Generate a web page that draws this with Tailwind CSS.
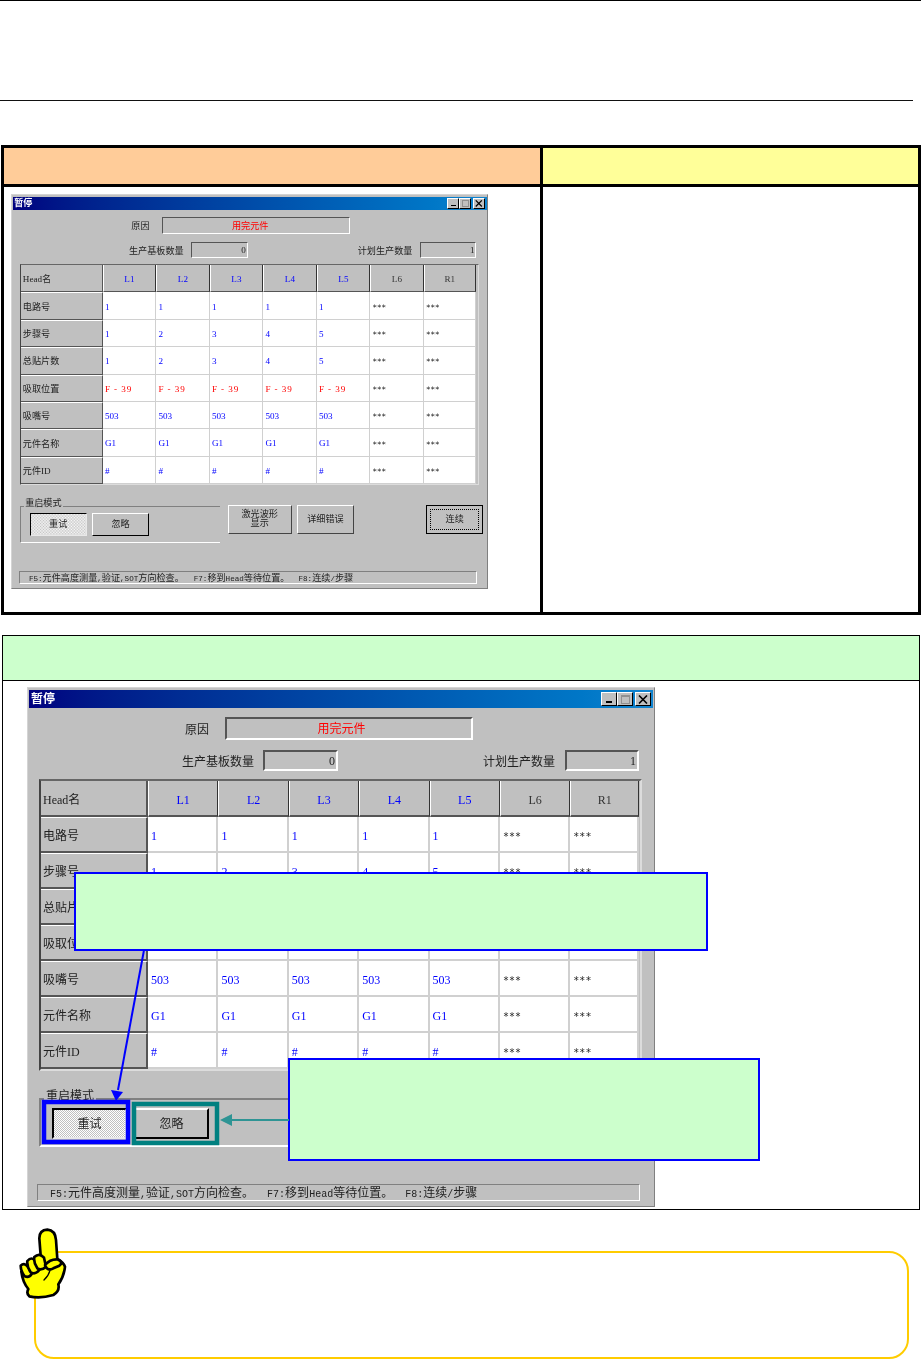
<!DOCTYPE html>
<html lang="zh">
<head>
    <meta charset="UTF-8">
    <title>暂停</title>
    <script src="https://cdn.jsdelivr.net/npm/@tailwindcss/browser@4"></script>
</head>
<body class="bg-white text-[#222] text-xs leading-none font-['Liberation_Serif','Noto_Sans_CJK_SC',serif]">

<div class="w-[921px] h-[1360px] overflow-hidden">
    <!-- Page header -->
    <div class="h-px bg-black"></div>
    <div class="h-[100px] w-[913px] border-b border-[#111]"></div>

    <!-- Upper table -->
    <div class="mt-[44px] ml-px w-[920px] h-[470px] border-[3px] border-black grid grid-cols-[536px_3px_375px] grid-rows-[36px_3px_425px] bg-black">
        <div class="bg-[#ffcc99]"></div>
        <div></div>
        <div class="bg-[#ffff99]"></div>
        <div class="col-span-3"></div>
        <div class="bg-white pl-[7px] pt-[7px]">
            <div class="[zoom:0.76] blur-[0.3px]" id="mini-slot"></div>
        </div>
        <div></div>
        <div class="bg-white"></div>
    </div>

    <!-- Lower panel -->
    <div class="relative mt-[20px] ml-[2px] w-[918px] h-[575px] border border-black">
        <div class="h-[45px] bg-[#ccffcc] border-b border-black"></div>
        <div class="pl-[24px] pt-[6px]">
            <!-- Pause dialog -->
            <div id="pause-window" class="w-[628px] h-[520px] overflow-hidden bg-[#c0c0c0] border border-[#d4d4d4] border-r-[#808080] border-b-[#808080] pt-[2px] px-px blur-[0.3px]">
                <div class="h-[18px] flex items-center justify-between pl-[2px] pr-[2px] bg-gradient-to-r from-[#000080] to-[#1084d0]">
                    <span class="text-white font-bold">暂停</span>
                    <div class="flex items-center">
                        <div class="w-[16px] h-[14px] bg-[#c0c0c0] border border-white border-r-black border-b-black relative">
                            <div class="absolute left-[4px] bottom-[2px] w-[6px] h-[2px] bg-black"></div>
                        </div>
                        <div class="w-[16px] h-[14px] bg-[#c0c0c0] border border-white border-r-black border-b-black flex items-center justify-center">
                            <div class="w-[9px] h-[9px] border border-[#909090] border-t-2"></div>
                        </div>
                        <div class="ml-[2px] w-[16px] h-[14px] bg-[#c0c0c0] border border-white border-r-black border-b-black flex items-center justify-center">
                            <svg width="10" height="9" viewBox="0 0 10 9"><path d="M1 0.5L9 8.5M9 0.5L1 8.5" stroke="#000" stroke-width="1.6" fill="none"/></svg>
                        </div>
                    </div>
                </div>

                <div class="mt-[9px] h-[23px] flex items-center">
                    <span class="ml-[156px] w-[24px] pt-[3px]">原因</span>
                    <div class="ml-[16px] w-[248px] h-[23px] flex items-center justify-center pr-[15px] pt-[1px] border-2 border-t-[#555] border-l-[#555] border-r-white border-b-white text-[#ff0000]">用完元件</div>
                </div>

                <div class="mt-[10px] h-[21px] flex items-center">
                    <span class="ml-[153px] w-[72px] pt-[3px]">生产基板数量</span>
                    <div class="ml-[9px] w-[75px] h-[21px] flex items-center justify-end pr-[1px] pt-[1px] border-2 border-t-[#555] border-l-[#555] border-r-white border-b-white">0</div>
                    <span class="ml-[145px] w-[72px] pt-[3px]">计划生产数量</span>
                    <div class="ml-[10px] w-[74px] h-[21px] flex items-center justify-end pr-[1px] pt-[1px] border-2 border-t-[#555] border-l-[#555] border-r-white border-b-white">1</div>
                </div>

                <!-- Head table, filled in by the script below -->
                <div id="head-table" class="mt-[8px] ml-[10px] w-[603px] border-2 border-t-[#666] border-l-[#444] border-r-[#dcdcdc] border-b-[#dcdcdc] grid grid-cols-[107px_repeat(6,70.4px)_68.6px] grid-rows-[36px_repeat(7,36px)]"></div>

                <div class="mt-[27px] ml-[10px] flex items-start">
                    <div class="relative w-[263px] h-[49px] border-t-2 border-b-2 border-l-2 border-t-[#808080] border-b-white border-l-[#808080] pl-[11px] pt-[8px] flex gap-[7px]">
                        <span class="absolute left-[3px] -top-[10px] px-[2px] bg-[#c0c0c0]">重启模式</span>
                        <div class="w-[75px] h-[31px] flex items-center justify-center border-2 border-t-black border-l-black border-r-[#e8e8e8] border-b-[#e8e8e8] bg-[repeating-conic-gradient(#ffffff_0_25%,#c0c0c0_0_50%)] bg-[length:2px_2px]">重试</div>
                        <div class="w-[75px] h-[31px] flex items-center justify-center border-2 border-t-white border-l-white border-r-black border-b-black">忽略</div>
                    </div>
                    <div class="-mt-px ml-[10px] w-[84px] h-[38px] flex items-center justify-center text-center border-2 border-t-white border-l-white border-r-[#444] border-b-[#444]">激光波形<br>显示</div>
                    <div class="-mt-px ml-[7px] w-[75px] h-[38px] flex items-center justify-center border-2 border-t-white border-l-white border-r-[#444] border-b-[#444]">详细错误</div>
                    <div class="-mt-px ml-[95px] w-[75px] h-[39px] p-[4px] border-2 border-black">
                        <div class="h-full flex items-center justify-center border border-dotted border-black">连续</div>
                    </div>
                </div>

                <div class="mt-[37px] ml-[8px] w-[603px] h-[17px] flex items-center pl-[12px] pt-[3px] border border-t-[#808080] border-l-[#808080] border-r-white border-b-white font-['Liberation_Mono','Noto_Sans_CJK_SC',monospace]">
                    <span><span class="text-[10px]">F5:</span>元件高度测量<span class="text-[10px]">,</span>验证<span class="text-[10px]">,SOT</span>方向检查。</span>
                    <span class="ml-[13px]"><span class="text-[10px]">F7:</span>移到<span class="text-[10px]">Head</span>等待位置。</span>
                    <span class="ml-[12px]"><span class="text-[10px]">F8:</span>连续<span class="text-[10px]">/</span>步骤</span>
                </div>
            </div>
        </div>

        <!-- Callouts over the dialog -->
        <div class="absolute left-[71px] top-[236px] w-[634px] h-[79px] bg-[#ccffcc] border-2 border-[#0000ff]"></div>
        <div class="absolute left-[285px] top-[422px] w-[472px] h-[103px] bg-[#ccffcc] border-2 border-[#0000ff]"></div>

        <!-- Highlights and arrows, viewBox is in page coordinates -->
        <svg class="absolute left-0 top-0" width="916" height="573" viewBox="3 636 916 573">
            <path d="M144 950L118 1090" stroke="#0000ff" stroke-width="2" fill="none"/>
            <path d="M116 1101L111 1090L123 1092Z" fill="#0000ff"/>
            <rect x="44" y="1102" width="84" height="40" fill="none" stroke="#0000ff" stroke-width="4.5"/>
            <rect x="134" y="1104" width="83" height="39" fill="none" stroke="#008080" stroke-width="4.5"/>
            <path d="M232 1120L289 1120" stroke="#2e9494" stroke-width="2" fill="none"/>
            <path d="M220 1120L232 1114L232 1126Z" fill="#2e9494"/>
        </svg>
    </div>

    <!-- Note box with pointing hand -->
    <div class="relative mt-[41px] ml-[34px] w-[875px] h-[108px] border-2 border-[#ffcc00] rounded-[20px]">
        <svg class="absolute -left-[21px] -top-[28px]" width="60" height="80" viewBox="45 0 180 240">
            <g fill="#ffff00" stroke="#000" stroke-width="8" stroke-linejoin="round" stroke-linecap="round">
                <path d="M122 92L118 40Q118 15 142 14Q166 16 168 45L172 102Q190 112 195 125Q192 155 175 178Q180 198 160 210Q120 222 88 214Q78 205 85 192Q68 172 64 140L122 120Z"/>
                <path d="M62 122Q72 112 82 123L96 145Q88 160 74 154Q62 138 62 122Z"/>
                <path d="M82 108Q95 93 106 108L118 135Q106 150 92 142Q80 125 82 108Z"/>
                <path d="M103 96Q118 82 132 98L138 125Q124 138 112 130Q100 112 103 96Z"/>
                <path d="M135 120Q150 102 172 103Q192 112 178 122L160 130Q142 140 135 120Z"/>
                <path d="M132 165Q146 152 150 136" fill="none" stroke-width="4"/>
            </g>
        </svg>
    </div>
</div>

<script>
    // Fill the head table
    const table = document.getElementById("head-table");
    const heads = ["L1", "L2", "L3", "L4", "L5", "L6", "R1"];
    const rows = [
        ["电路号", ["1", "1", "1", "1", "1"], "text-[#0000ff]"],
        ["步骤号", ["1", "2", "3", "4", "5"], "text-[#0000ff]"],
        ["总贴片数", ["1", "2", "3", "4", "5"], "text-[#0000ff]"],
        ["吸取位置", ["F - 39", "F - 39", "F - 39", "F - 39", "F - 39"], "text-[#ff0000] tracking-[1.2px]"],
        ["吸嘴号", ["503", "503", "503", "503", "503"], "text-[#0000ff]"],
        ["元件名称", ["G1", "G1", "G1", "G1", "G1"], "text-[#0000ff]"],
        ["元件ID", ["#", "#", "#", "#", "#"], "text-[#0000ff]"]
    ];

    let html = '<div class="flex items-center pl-[2px] pt-[4px] border-b-2 border-r-2 border-[#555]">Head名</div>';
    heads.forEach((name, i) => {
        const color = i < 5 ? "text-[#0000ff]" : "text-[#333]";
        html += `<div class="flex items-center justify-center pt-[4px] border-l border-l-white border-r border-r-[#333] border-b-2 border-b-[#555] ${color}">${name}</div>`;
    });
    rows.forEach(([label, values, color]) => {
        html += `<div class="flex items-center pl-[2px] pt-[3px] border-t border-t-white border-b-2 border-b-[#555] border-r-2 border-r-[#555]">${label}</div>`;
        values.forEach(v => {
            html += `<div class="flex items-center pl-[3px] pt-[4px] bg-white border-r-2 border-b-2 border-[#d0d0d0] ${color}">${v}</div>`;
        });
        for (let i = 0; i < 2; i++) {
            html += `<div class="flex items-center pl-[3px] pt-[5px] bg-white text-[#222] text-[10px] font-['DejaVu_Sans_Mono',monospace] border-r-2 border-b-2 border-[#d0d0d0]">***</div>`;
        }
    });
    table.innerHTML = html;

    // Small copy of the dialog for the upper table
    const copy = document.getElementById("pause-window").cloneNode(true);
    copy.removeAttribute("id");
    copy.classList.remove("blur-[0.3px]");
    copy.querySelector("#head-table").removeAttribute("id");
    document.getElementById("mini-slot").appendChild(copy);
</script>
</body>
</html>
